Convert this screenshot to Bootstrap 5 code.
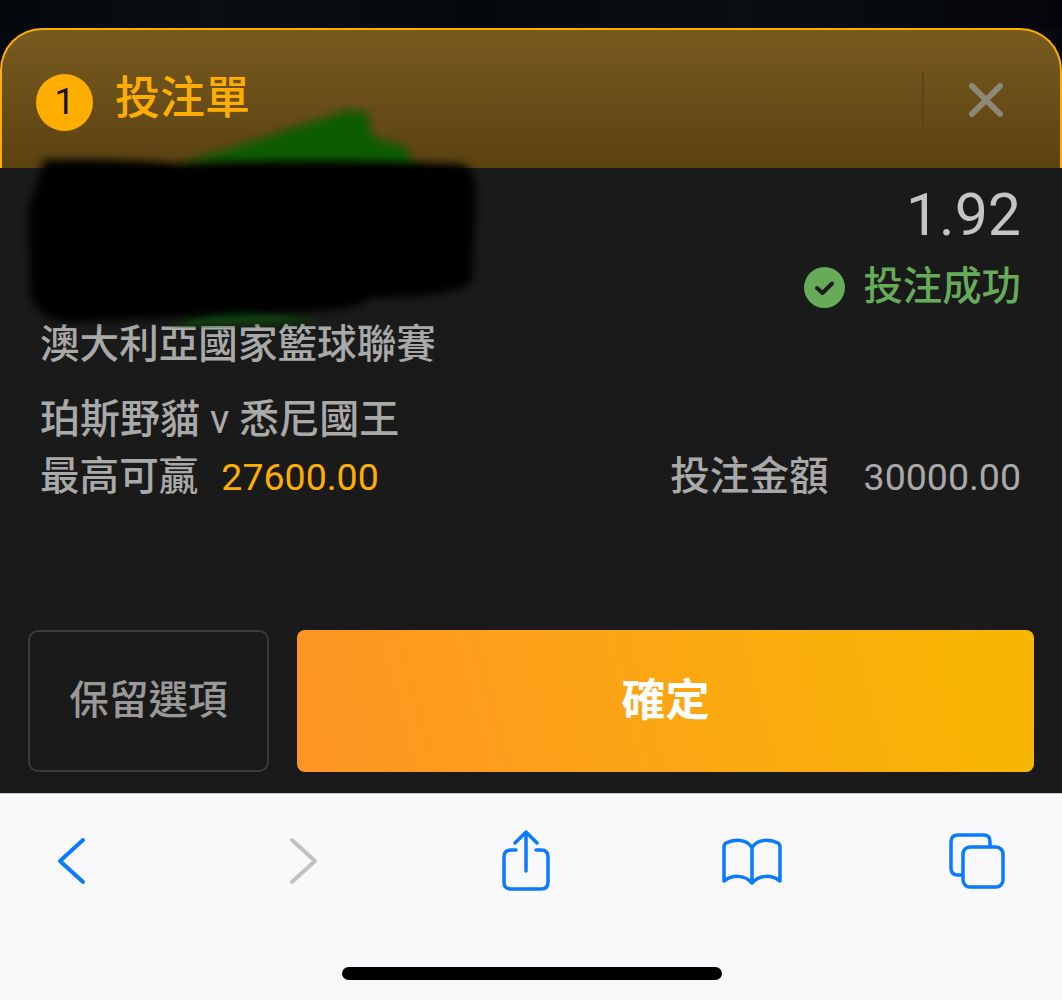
<!DOCTYPE html>
<html lang="zh-Hant">
<head>
    <meta charset="UTF-8">
    <meta name="viewport" content="width=device-width, initial-scale=1.0">
    <title>投注單</title>
    <link href="https://cdn.jsdelivr.net/npm/bootstrap@5.3.3/dist/css/bootstrap.min.css" rel="stylesheet">
    <style>
        html, body { height: 1000px; overflow: hidden; }
        body { background: #05080d; font-family: Roboto, "Noto Sans CJK TC", sans-serif; position: relative; }
        .top-gap { height: 28px; background: linear-gradient(90deg, #04070c, #0b0f13 20%, #05080d 45%, #0b0e12 70%, #03050a); }
        .slip-head { height: 140px; background: linear-gradient(180deg, #775a1f, #5b4211); border: 2px solid #ffae00; border-bottom: 0; border-radius: 42px 42px 0 0; padding: 6px 56px 0 34px; }
        .count-dot { width: 57px; height: 57px; border-radius: 50%; background: #ffae00; color: #111; font-size: 36px; line-height: 1; margin-right: 22px; }
        .slip-title { color: #ffae00; font-size: 45px; font-weight: 500; line-height: 1; margin-top: -8px; }
        .head-sep { width: 2px; height: 56px; background: #5d4516; margin: -4px 44px 0 0; }
        .head-close { margin-top: -4px; }
        .slip-body { height: 625px; background: #1a1a1a; color: #a9a9a9; font-weight: 500; padding: 18px 41px 21px 40px; }
        .odds-val { color: #c4c4c4; font-size: 59px; font-weight: 400; line-height: 58px; }
        .ok-state { color: #66ab58; font-size: 39.4px; line-height: 50px; margin-top: 18px; }
        .ok-state svg { margin-right: 18px; }
        .league-line { font-size: 39.6px; line-height: 50px; margin-top: 8px; }
        .match-line { font-size: 40px; line-height: 50px; margin-top: 25px; }
        .match-v { font-weight: 400; }
        .amount-line { font-size: 39.6px; line-height: 50px; margin-top: 7px; }
        .num-val { font-size: 37.5px; font-weight: 400; }
        .win-val { color: #ffae00; margin-left: 23px; }
        .stake-val { margin-left: 35px; }
        .btn-row { margin: auto -13px 0 -12px; gap: 28px; }
        .btn.keep-btn { width: 241px; height: 142px; border: 2px solid #3b3b3b; border-radius: 10px; background: transparent; color: #999; font-size: 39.6px; font-weight: 500; padding: 0; }
        .btn.ok-btn { flex: 1; height: 142px; border: 0; border-radius: 8px; background: linear-gradient(75deg, #ff9425, #f7b800); color: #fff; font-size: 44px; font-weight: 700; padding: 0; }
        .ios-bar { height: 207px; background: #f9f9fb; border-top: 1px solid #c9c9cb; padding: 36px 0 0 57px; }
        .ios-bar svg { display: block; }
        .ios-icons { height: 62px; }
        .ic-fwd { margin-left: 201px; }
        .ic-share { margin-left: 184px; }
        .ic-book { margin-left: 172px; }
        .ic-tabs { margin-left: 167px; }
        .home-bar { width: 380px; height: 13px; border-radius: 7px; background: #000; margin: 75px 0 0 285px; }
        .scribble { position: absolute; left: 0; top: 100px; pointer-events: none; }
    </style>
</head>
<body>
    <div class="top-gap"></div>

    <!-- cabecera -->
    <div class="slip-head d-flex align-items-center">
        <div class="count-dot d-flex align-items-center justify-content-center">1</div>
        <div class="slip-title">投注單</div>
        <div class="head-sep ms-auto"></div>
        <svg class="head-close" width="36" height="36" viewBox="0 0 36 36"><path d="M4 4 L32 32 M32 4 L4 32" stroke="#8f8779" stroke-width="6" stroke-linecap="round"/></svg>
    </div>

    <!-- contenido -->
    <div class="slip-body d-flex flex-column">
        <div class="d-flex flex-column align-items-end">
            <div class="odds-val">1.92</div>
            <div class="ok-state d-flex align-items-center">
                <svg width="41" height="41" viewBox="0 0 41 41"><circle cx="20.5" cy="20.5" r="20.5" fill="#66ab58"/><path d="M13 21 L18.5 26 L28 16.5" fill="none" stroke="#1a1a1a" stroke-width="4" stroke-linecap="round" stroke-linejoin="round"/></svg>
                投注成功
            </div>
        </div>
        <div class="league-line">澳大利亞國家籃球聯賽</div>
        <div class="match-line">珀斯野貓 <span class="match-v">v</span> 悉尼國王</div>
        <div class="amount-line d-flex justify-content-between">
            <div>最高可贏<span class="num-val win-val">27600.00</span></div>
            <div>投注金額<span class="num-val stake-val">30000.00</span></div>
        </div>
        <div class="btn-row d-flex">
            <button type="button" class="btn keep-btn">保留選項</button>
            <button type="button" class="btn ok-btn">確定</button>
        </div>
    </div>

    <!-- barra de Safari -->
    <div class="ios-bar">
        <div class="ios-icons d-flex align-items-center">
            <svg width="30" height="48" viewBox="0 0 30 48"><path d="M26 3 L3 24 L26 45" fill="none" stroke="#0a7aff" stroke-width="4" stroke-linecap="round" stroke-linejoin="round"/></svg>
            <svg class="ic-fwd" width="30" height="48" viewBox="0 0 30 48"><path d="M4 3 L27 24 L4 45" fill="none" stroke="#c2c2c4" stroke-width="4" stroke-linecap="round" stroke-linejoin="round"/></svg>
            <svg class="ic-share" width="48" height="62" viewBox="0 0 48 62"><path d="M14 20 H9 Q2 20 2 27 V52 Q2 59 9 59 H39 Q46 59 46 52 V27 Q46 20 39 20 H34 M24 41 V3 M13 13 L24 2 L35 13" fill="none" stroke="#0a7aff" stroke-width="3.5" stroke-linecap="round" stroke-linejoin="round"/></svg>
            <svg class="ic-book" width="60" height="50" viewBox="0 0 60 50"><path d="M30 12 C26 4 14 2 4 7 Q2 8 2 11 V45 C10 39 22 38 30 47 C38 38 50 39 58 45 V11 Q58 8 56 7 C46 2 34 4 30 12 V47" fill="none" stroke="#0a7aff" stroke-width="3.5" stroke-linecap="round" stroke-linejoin="round"/></svg>
            <svg class="ic-tabs" width="56" height="56" viewBox="0 0 56 56"><path d="M15 42 H9 Q2 42 2 35 V9 Q2 2 9 2 H35 Q41 2 41 9 V13" fill="none" stroke="#0a7aff" stroke-width="3.5"/><rect x="14" y="14" width="40" height="40" rx="7" fill="none" stroke="#0a7aff" stroke-width="3.5"/></svg>
        </div>
        <div class="home-bar"></div>
    </div>

    <!-- tachado encima del contenido -->
    <svg class="scribble" width="490" height="240" viewBox="0 0 490 240">
        <defs><filter id="soft"><feGaussianBlur stdDeviation="4"/></filter></defs>
        <path d="M176 66 L349 10 L368 13 L372 37 L406 47 L416 70 Z" fill="#0d5c06" filter="url(#soft)"/>
        <path d="M168 226 L233 206 L322 220 Z" fill="#0e4f09" filter="url(#soft)"/>
        <path d="M44 60 Q120 58 180 64 Q300 58 460 64 Q476 66 476 100 L472 180 Q465 196 370 198 Q362 212 260 214 L70 222 Q32 218 30 190 L28 110 Q35 90 44 60 Z" fill="#000" filter="url(#soft)"/>
    </svg>

    <script src="https://cdn.jsdelivr.net/npm/bootstrap@5.3.3/dist/js/bootstrap.bundle.min.js"></script>
</body>
</html>
